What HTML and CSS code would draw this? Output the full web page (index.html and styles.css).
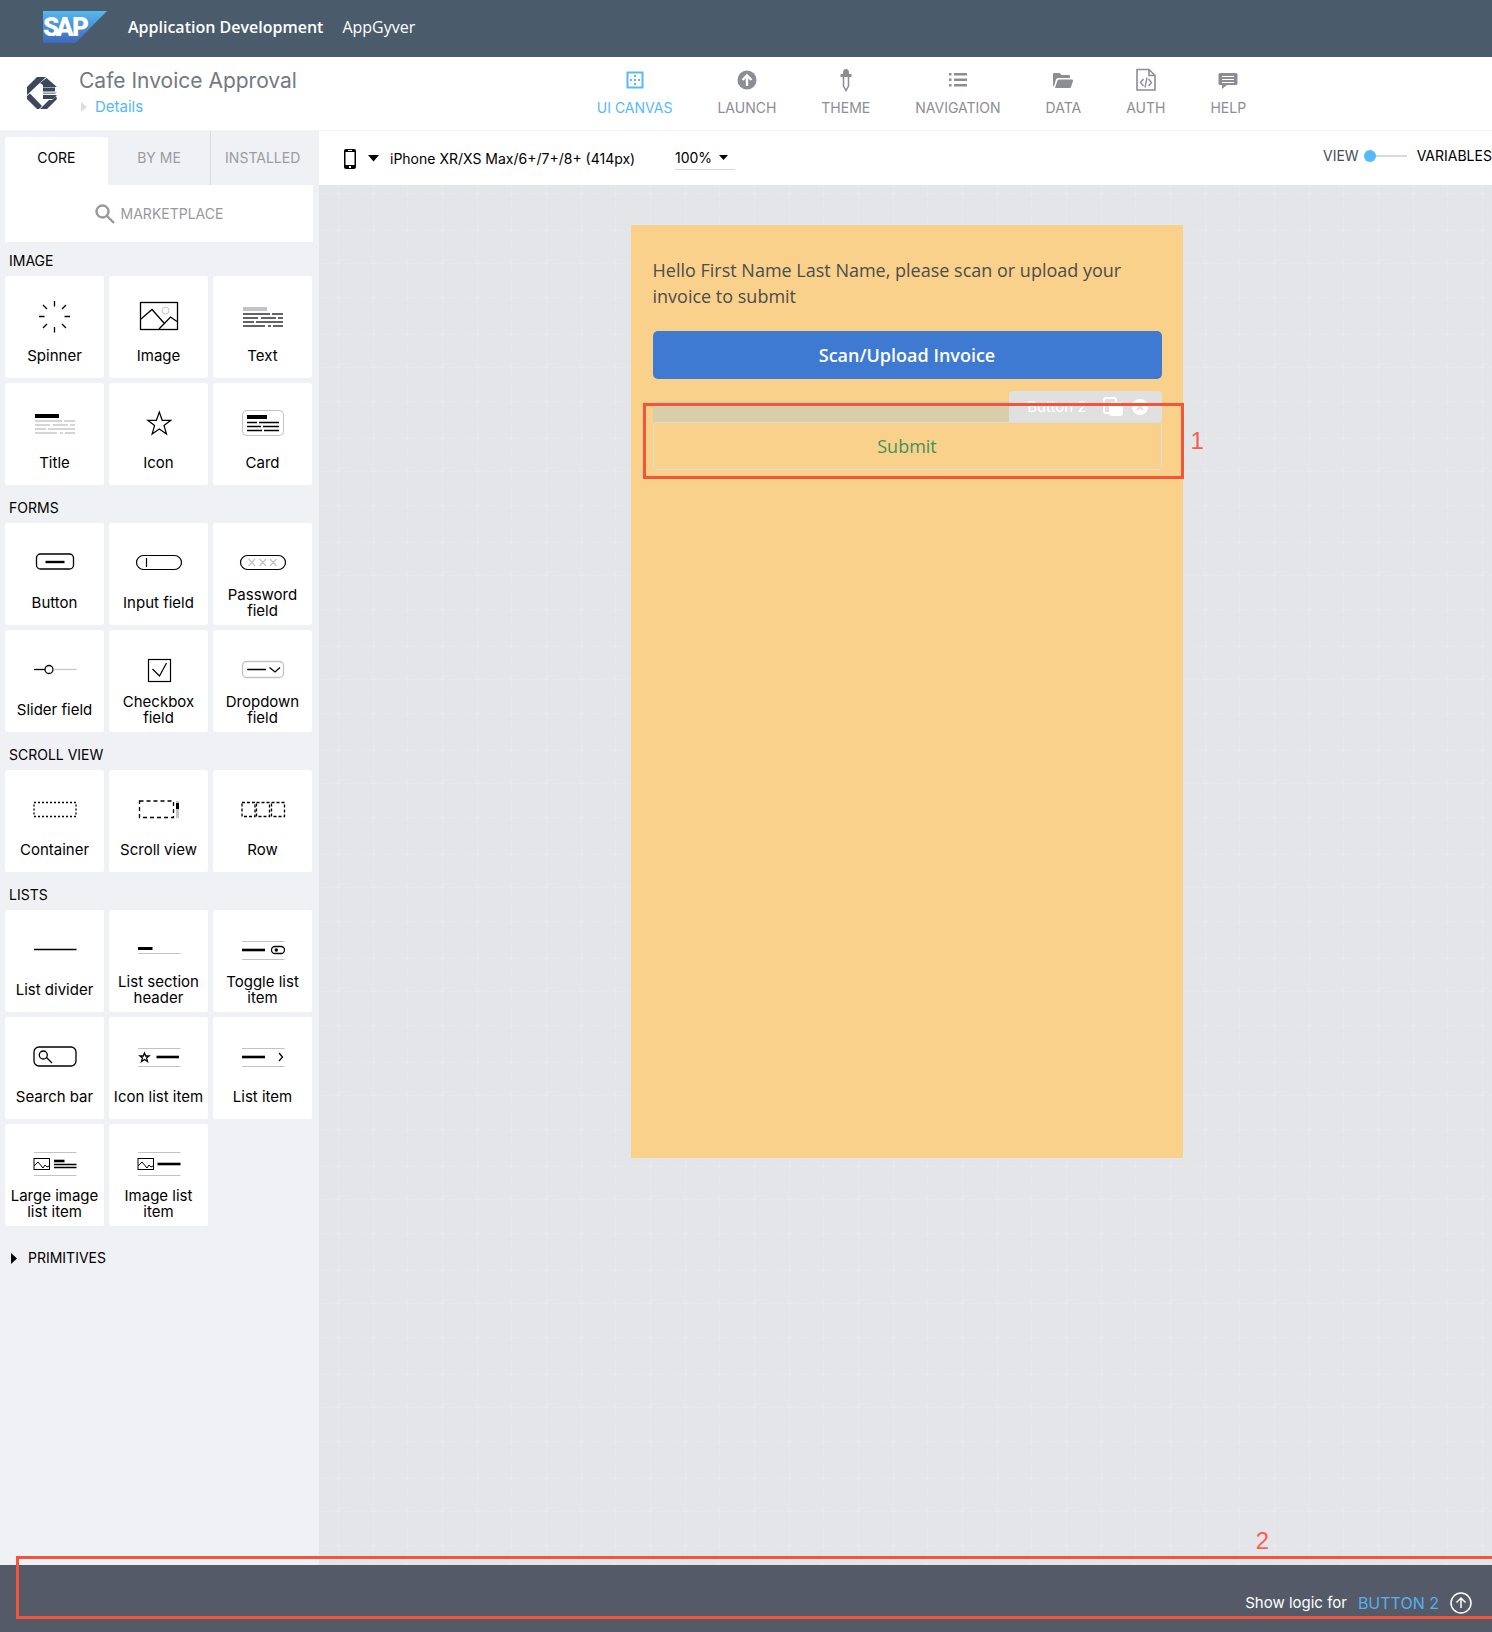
FILE: index.html
```html
<!DOCTYPE html>
<html lang="en">
<head>
<meta charset="utf-8">
<meta name="viewport" content="width=device-width, initial-scale=1">
<title>Cafe Invoice Approval</title>
<link rel="stylesheet" href="styles.css">
</head>
<body>
<svg class="defs" aria-hidden="true">
  <defs>
    <g id="text-lines" fill="none" stroke-width="2">
      <path d="M5 18H32M34 18H45M5 22H20M23 22H38M40 22H45M5 26H16M18 26H45M5 30H27M30 30H33M35 30H45"/>
    </g>
    <g id="thumb" fill="none" stroke="#000">
      <rect x="4" y="14.500" width="15.500" height="11"/>
      <path d="M4 22l4-4 5 6 2-3 2 2 2-1" />
    </g>
  </defs>
</svg>

<header class="topbar">
  <svg class="sap-logo" viewBox="0 0 64 32" width="64" height="32" role="img" aria-label="SAP">
    <defs><linearGradient id="sap" x1="0" y1="0" x2="0" y2="1"><stop offset="0" stop-color="#55b9ec"/><stop offset="1" stop-color="#4067bd"/></linearGradient></defs>
    <path d="M0 0H64L32.500 32H0Z" fill="url(#sap)"/>
    <text class="sap-text" y="25" x="0 13 29">SAP</text>
  </svg>
  <strong class="suite">Application Development</strong>
  <span class="product">AppGyver</span>
</header>

<div class="appbar">
  <div class="project">
    <svg width="30" height="32" viewBox="0 0 30 32" fill="#3a475c" aria-hidden="true">
      <path d="M10 0H19L0 18V10Z"/>
      <path d="M19.500 1L30 10H16V8L13 6Z"/>
      <path d="M16 10.500H28V14.500H16Z"/>
      <path d="M16 15.500H30L28 17H16Z" fill="#8a93a1"/>
      <path d="M16 18H30L26 22H16Z"/>
      <path d="M0 19L3 16.500L15 29L12 32H10L0 22Z"/>
      <path d="M29 19L30 22L20 32H13L18 27L22 23H25Z"/>
    </svg>
    <div class="project-text">
      <h1>Cafe Invoice Approval</h1>
      <a class="details" href="#details"><svg width="6" height="10" viewBox="0 0 6 10" aria-hidden="true"><path d="M0 0L6 5L0 10Z" fill="#dcdde1"/></svg>Details</a>
    </div>
  </div>
  <nav class="mainnav">
    <a class="active" href="#canvas"><svg width="24" height="24" viewBox="0 0 24 24" aria-hidden="true"><rect x="4.500" y="4.500" width="15" height="15" fill="none" stroke="currentColor" stroke-width="2"/><path d="M11 7h2v2h-2zM11 11h2v2h-2zM11 15h2v2h-2zM7 11h2v2H7zM15 11h2v2h-2z" fill="currentColor"/></svg>UI CANVAS</a>
    <a href="#launch"><svg width="24" height="24" viewBox="0 0 24 24" aria-hidden="true"><circle cx="12" cy="12" r="9.500" fill="currentColor"/><path d="M12 18V8M7.500 12L12 7.500L16.500 12" fill="none" stroke="#fff" stroke-width="2.400"/></svg>LAUNCH</a>
    <a href="#theme"><svg width="24" height="24" viewBox="0 0 24 24" aria-hidden="true"><path d="M9 5Q9 1 12 1T15 5V6H17.500V9H6.500V6H9Z" fill="currentColor"/><path d="M9.500 9V18L12 22.500L14.500 18V9" fill="none" stroke="currentColor" stroke-width="1.500"/></svg>THEME</a>
    <a href="#navigation"><svg width="24" height="24" viewBox="0 0 24 24" aria-hidden="true"><path d="M3 5h2.500v2.500H3zM8 5h13v2.500H8zM3 10.500h2.500V13H3zM8 10.500h13V13H8zM3 16h2.500v2.500H3zM8 16h13v2.500H8z" fill="currentColor"/></svg>NAVIGATION</a>
    <a href="#data"><svg width="24" height="24" viewBox="0 0 24 24" aria-hidden="true"><path d="M2 18V6Q2 5 3 5H8.500L10.500 7H18Q19 7 19 8V10H7Q5.500 10 5 11.500L3 18ZM4 20L6.500 12.500Q7 11.500 8 11.500H21Q22.500 11.500 22 13L20 19Q19.700 20 18.500 20Z" fill="currentColor"/></svg>DATA</a>
    <a href="#auth"><svg width="24" height="24" viewBox="0 0 24 24" aria-hidden="true"><path d="M3 1.500H15L21 7.500V22H3ZM15 1.500V7.500H21" fill="none" stroke="currentColor" stroke-width="1.600"/><path d="M9.500 11L6.500 14.500L9.500 18M14.500 11L17.500 14.500L14.500 18M13 9.500L11 19.500" fill="none" stroke="currentColor" stroke-width="1.400"/></svg>AUTH</a>
    <a href="#help"><svg width="24" height="24" viewBox="0 0 24 24" aria-hidden="true"><path d="M4 5H20Q21.500 5 21.500 6.500V15.500Q21.500 17 20 17H11L6 21V17H4Q2.500 17 2.500 15.500V6.500Q2.500 5 4 5Z" fill="currentColor"/><path d="M6 8.500H18M6 11.500H18M6 14.500H18" stroke="#fff" stroke-width="1.200"/></svg>HELP</a>
  </nav>
</div>

<div class="workspace">
  <aside class="sidebar">
    <div class="tabs">
      <button class="tab active">CORE</button>
      <button class="tab">BY ME</button>
      <button class="tab last">INSTALLED</button>
    </div>
    <button class="market"><svg width="20" height="20" viewBox="0 0 20 20" fill="none" stroke="#98999d" stroke-width="2.400" aria-hidden="true"><circle cx="7.500" cy="7.500" r="6"/><path d="M12 12L19 19"/></svg>MARKETPLACE</button>

    <div class="library">
      <section>
        <h2>IMAGE</h2>
        <div class="tiles">
          <button class="tile"><svg width="49" height="40" viewBox="0 0 49 40" fill="none" stroke="#000" aria-hidden="true"><path d="M24.500 5V10.500M24.500 31V36.500M9 20.500H14.500M34.500 20.500H40M13 9L17 13M36 9L32 13M13 32L17 28M36 32L32 28" stroke-width="1.300"/></svg><span>Spinner</span></button>
          <button class="tile"><svg width="49" height="40" viewBox="0 0 49 40" fill="none" stroke="#000" aria-hidden="true"><circle cx="31.500" cy="14.500" r="3.500" stroke="#c4c4c8"/><rect x="6.500" y="6.500" width="37" height="27" stroke-width="1.300"/><path d="M7 23L18 13.500L30 27M25 33L36.500 21L43 25.500" stroke-width="1.300"/></svg><span>Image</span></button>
          <button class="tile"><svg width="49" height="40" viewBox="0 0 49 40" aria-hidden="true"><path d="M5 11H29V15H5Z" fill="#c2c2c8"/><use href="#text-lines" stroke="#646466"/></svg><span>Text</span></button>
          <button class="tile"><svg width="49" height="40" viewBox="0 0 49 40" aria-hidden="true"><path d="M5 11H29V15H5Z"/><use href="#text-lines" stroke="#d4d4d9"/></svg><span>Title</span></button>
          <button class="tile"><svg width="49" height="40" viewBox="0 0 49 40" fill="none" stroke="#000" aria-hidden="true"><path d="M25.300 9L28.200 17.300H36.800L30 22.500L32.500 31L25.300 26L18.100 31L20.600 22.500L13.800 17.300H22.400Z" stroke-width="1.200"/></svg><span>Icon</span></button>
          <button class="tile"><svg width="49" height="40" viewBox="0 0 49 40" fill="none" stroke="#000" aria-hidden="true"><rect x="4.500" y="7.500" width="41" height="25" rx="4" stroke="#c2c2c6"/><path d="M9 14H29" stroke-width="4"/><path d="M9 19.500H19M21 19.500H41M9 23.500H23M25 23.500H41M9 27.500H24M26 27.500H41" stroke-width="1.300"/></svg><span>Card</span></button>
        </div>
      </section>

      <section>
        <h2>FORMS</h2>
        <div class="tiles">
          <button class="tile"><svg width="49" height="40" viewBox="0 0 49 40" fill="none" stroke="#000" aria-hidden="true"><rect x="6.500" y="11" width="37" height="15" rx="4" stroke-width="1.300"/><path d="M15.500 19H34.500" stroke-width="2.400"/></svg><span>Button</span></button>
          <button class="tile"><svg width="49" height="40" viewBox="0 0 49 40" fill="none" stroke="#000" stroke-width="1.200" aria-hidden="true"><rect x="2.500" y="12.500" width="45" height="14" rx="7"/><path d="M12.500 15V24"/></svg><span>Input field</span></button>
          <button class="tile"><svg width="49" height="40" viewBox="0 0 49 40" fill="none" stroke="#000" stroke-width="1.200" aria-hidden="true"><rect x="2.500" y="12.500" width="45" height="14" rx="7"/><path d="M10.500 16L17 23M17 16L10.500 23M21.500 16L28 23M28 16L21.500 23M32 16L38.500 23M38.500 16L32 23" stroke="#c2c2c6"/></svg><span>Password field</span></button>
          <button class="tile"><svg width="49" height="40" viewBox="0 0 49 40" fill="none" stroke="#000" stroke-width="1.300" aria-hidden="true"><path d="M4 19.500H15"/><circle cx="19" cy="19.500" r="4"/><path d="M23.500 19.500H46.500" stroke="#c8c8cb"/></svg><span>Slider field</span></button>
          <button class="tile"><svg width="49" height="40" viewBox="0 0 49 40" fill="none" stroke="#000" stroke-width="1.200" aria-hidden="true"><rect x="14.500" y="9.500" width="22" height="22"/><path d="M18.500 19L25.500 26L32.500 13"/></svg><span>Checkbox field</span></button>
          <button class="tile"><svg width="49" height="40" viewBox="0 0 49 40" fill="none" stroke="#000" stroke-width="1.300" aria-hidden="true"><rect x="4.500" y="11.500" width="41" height="16" rx="4" stroke="#c2c2c6"/><path d="M9 19.500H28M31.500 17.500L37 22L42 17.500"/></svg><span>Dropdown field</span></button>
        </div>
      </section>

      <section>
        <h2>SCROLL VIEW</h2>
        <div class="tiles">
          <button class="tile"><svg width="49" height="40" viewBox="0 0 49 40" fill="none" stroke="#000" stroke-width="1.300" aria-hidden="true"><rect x="4" y="12.500" width="42" height="14" stroke-dasharray="2 2"/></svg><span>Container</span></button>
          <button class="tile"><svg width="49" height="40" viewBox="0 0 49 40" fill="none" stroke="#000" stroke-width="1.300" aria-hidden="true"><rect x="5.500" y="11" width="34" height="16.500" stroke-dasharray="4 3"/><path d="M43.500 11V28" stroke="#c4c4c8" stroke-width="3"/><path d="M43.500 13V19" stroke-width="3"/></svg><span>Scroll view</span></button>
          <button class="tile"><svg width="49" height="40" viewBox="0 0 49 40" fill="none" stroke="#000" stroke-width="1.300" stroke-dasharray="3 2" aria-hidden="true"><rect x="4" y="12.500" width="13" height="14"/><rect x="18.500" y="12.500" width="13" height="14"/><rect x="33.500" y="12.500" width="13" height="14"/></svg><span>Row</span></button>
        </div>
      </section>

      <section>
        <h2>LISTS</h2>
        <div class="tiles">
          <button class="tile"><svg width="49" height="40" viewBox="0 0 49 40" stroke="#000" stroke-width="1.300" aria-hidden="true"><path d="M4 19.500H46.500"/></svg><span>List divider</span></button>
          <button class="tile"><svg width="49" height="40" viewBox="0 0 49 40" stroke="#000" aria-hidden="true"><path d="M4 18.500H18.500" stroke-width="3"/><path d="M4 23.500H46.500" stroke="#c2c2c6"/></svg><span>List section header</span></button>
          <button class="tile"><svg width="49" height="40" viewBox="0 0 49 40" fill="none" stroke="#000" aria-hidden="true"><path d="M4 11.500H46.500M4 29.500H46.500" stroke="#c2c2c6"/><path d="M4 20H27" stroke-width="2.600"/><rect x="33.500" y="16.500" width="13" height="7" rx="3.500" stroke-width="1.300"/><circle cx="38.300" cy="20" r="1.700" fill="#000" stroke="none"/></svg><span>Toggle list item</span></button>
          <button class="tile"><svg width="49" height="40" viewBox="0 0 49 40" fill="none" stroke="#000" stroke-width="1.300" aria-hidden="true"><rect x="4" y="10" width="42" height="19" rx="5"/><circle cx="13.300" cy="18" r="4"/><path d="M16.500 20.500L22 26"/></svg><span>Search bar</span></button>
          <button class="tile"><svg width="49" height="40" viewBox="0 0 49 40" fill="none" stroke="#000" aria-hidden="true"><path d="M4 11.500H46.500M4 29.500H46.500" stroke="#c2c2c6"/><path d="M10.500 16L11.700 19H15L12.500 21L13.500 24.500L10.500 22.500L7.500 24.500L8.500 21L6 19H9.300Z" stroke-width="1.300"/><path d="M22.500 20H45" stroke-width="2.600"/></svg><span>Icon list item</span></button>
          <button class="tile"><svg width="49" height="40" viewBox="0 0 49 40" fill="none" stroke="#000" aria-hidden="true"><path d="M4 11.500H46.500M4 29.500H46.500" stroke="#c2c2c6"/><path d="M4 20H27" stroke-width="2.600"/><path d="M41 16L44.500 20L41 24" stroke-width="1.300"/></svg><span>List item</span></button>
          <button class="tile"><svg width="49" height="40" viewBox="0 0 49 40" fill="none" stroke="#000" aria-hidden="true"><path d="M4 8.500H46.500M4 31.500H46.500" stroke="#c2c2c6"/><use href="#thumb"/><path d="M24 17H34.500" stroke-width="2.600"/><path d="M24 20.500H46.500M24 23.500H46.500" stroke-width="1.300"/></svg><span>Large image list item</span></button>
          <button class="tile"><svg width="49" height="40" viewBox="0 0 49 40" fill="none" stroke="#000" aria-hidden="true"><path d="M4 8.500H46.500M4 31.500H46.500" stroke="#c2c2c6"/><use href="#thumb"/><path d="M23.500 20H46.500" stroke-width="2.600"/></svg><span>Image list item</span></button>
        </div>
      </section>
    </div>

    <button class="primitives"><svg width="6" height="11" viewBox="0 0 6 11" aria-hidden="true"><path d="M0 0L6 5.500L0 11Z"/></svg>PRIMITIVES</button>
  </aside>

  <main class="main">
    <div class="toolbar">
      <label class="device" for="device">
        <svg width="12" height="20" viewBox="0 0 12 20" aria-hidden="true"><rect width="12" height="20" rx="2"/><path d="M1.500 3H10.500V16H1.500Z" fill="#fff"/><path d="M4 1.500H8" stroke="#fff"/><rect x="5" y="17" width="2" height="2" fill="#fff"/></svg>
        <svg width="11" height="7" viewBox="0 0 11 7" aria-hidden="true"><path d="M0 0H11L5.500 6.500Z"/></svg>
      </label>
      <select class="device-select" id="device"><option>iPhone XR/XS Max/6+/7+/8+ (414px)</option></select>
      <div class="zoom">
        <select id="zoom" aria-label="Zoom"><option>100%</option></select>
        <svg width="9" height="5" viewBox="0 0 9 5" aria-hidden="true"><path d="M0 0H9L4.500 5Z"/></svg>
      </div>
      <div class="mode">
        <label class="mode-view" for="mode">VIEW</label>
        <input type="range" id="mode" min="0" max="1" value="0">
        <span>VARIABLES</span>
      </div>
    </div>

    <div class="canvas">
      <div class="phone">
        <p class="greeting">Hello First Name Last Name, please scan or upload your invoice to submit</p>
        <button class="scan">Scan/Upload Invoice</button>
        <div class="selected">
          <div class="spacing"></div>
          <div class="tag">
            <span>Button 2</span>
            <svg width="20" height="20" viewBox="0 0 20 20" aria-hidden="true"><path d="M13 5V3Q13 1 11 1H3Q1 1 1 3V14Q1 16 3 16H7" fill="none" stroke="#fff" stroke-width="2"/><rect x="6" y="5" width="14" height="14" rx="3" fill="#fff"/></svg>
            <svg width="16" height="16" viewBox="0 0 16 16" aria-hidden="true"><circle cx="8" cy="8" r="8" fill="#fff"/><path d="M5 5L11 11M11 5L5 11" stroke="#e0e0e0" stroke-width="2"/></svg>
          </div>
          <button class="submit">Submit</button>
          <div class="mark mark-one"></div>
          <span class="mark-label label-one">1</span>
        </div>
      </div>
    </div>
  </main>
</div>

<footer class="logicbar">
  <span>Show logic for</span>
  <a href="#logic">BUTTON 2</a>
  <svg width="22" height="22" viewBox="0 0 22 22" fill="none" stroke="#fff" stroke-width="1.500" aria-hidden="true"><circle cx="11" cy="11" r="10"/><path d="M11 16V6.500M6.500 10.500L11 6L15.500 10.500"/></svg>
  <div class="mark mark-two"></div>
  <span class="mark-label label-two">2</span>
</footer>
</body>
</html>
```

FILE: styles.css
```css
* { box-sizing: border-box; }

body {
  margin: 0;
  min-height: 100vh;
  display: flex;
  flex-direction: column;
  overflow-x: hidden;
  background: #fff;
  color: #000;
  font: 14px/20px Inter, "Open Sans", sans-serif;
}

button, select, input { font: inherit; color: inherit; }
button { border: 0; padding: 0; cursor: pointer; }
a { text-decoration: none; }
svg { display: block; flex: none; }
.defs { position: absolute; width: 0; height: 0; }

/* Top bars */
.topbar {
  display: flex;
  align-items: center;
  height: 57px;
  padding: 0 43px 4px;
  background: #4a5b6c;
  color: #fff;
  font: 16px/20px "Open Sans", sans-serif;
}
.sap-text { font: 900 26px Roboto, sans-serif; fill: #fff; }
.suite { margin-left: 21px; font-weight: 600; }
.product { margin-left: 19px; }

.appbar {
  display: grid;
  grid-template-columns: 40% 1fr;
  height: 74px;
  border-bottom: 1px solid #f3f4f6;
}
.project { display: flex; align-items: center; gap: 22px; padding: 0 27px 2px; }
.project-text { display: flex; flex-direction: column; gap: 4px; }
h1 { margin: 0; font-size: 21px; line-height: 24px; font-weight: 400; color: #737983; }
.details { display: flex; align-items: center; gap: 8px; padding-left: 2px; color: #55b7f5; font-size: 15px; }

.mainnav { display: flex; gap: 45px; padding-top: 11px; }
.mainnav a { display: flex; flex-direction: column; align-items: center; gap: 6px; color: #8c8d95; }
.mainnav .active { color: #57b9f8; }

/* Component library */
.workspace { flex: 1; display: flex; }
.sidebar { flex: none; width: 319px; padding: 0 5px; background: #f0f1f4; }
.tabs { display: flex; height: 54px; }
.tab { flex: 1; background: none; color: #9b9ca1; border-right: 1px solid #d9dade; }
.tab.active { margin-top: 6px; padding-bottom: 6px; border: 0; border-radius: 3px 3px 0 0; background: #fff; color: #000; }
.tab.last { border: 0; }
.market {
  display: flex;
  align-items: center;
  justify-content: center;
  gap: 6px;
  width: 308px;
  height: 57px;
  background: #fff;
  color: #98999d;
}
.library { display: flex; flex-direction: column; gap: 14px; padding-top: 10px; }
h2 { margin: 0 4px 6px; font-size: 14px; line-height: 18px; font-weight: 400; }
.tiles { display: grid; grid-template-columns: repeat(3, 99px); gap: 5px; }
.tile {
  display: flex;
  flex-direction: column;
  align-items: center;
  gap: 4px;
  height: 102px;
  padding: 20px 2px 0;
  border-radius: 3px;
  background: #fff;
  font-size: 15px;
  line-height: 16px;
}
.tile span { display: flex; align-items: center; height: 32px; }
.primitives { display: flex; align-items: center; gap: 11px; margin: 22px 6px; background: none; }

/* Toolbar */
.main { flex: 1; min-width: 0; display: flex; flex-direction: column; }
.toolbar { display: flex; align-items: center; height: 54px; padding: 1px 0 0 25px; }
.toolbar select { appearance: none; padding: 0; border: 0; background: none; }
.device { display: flex; align-items: center; gap: 12px; }
.device-select { margin-left: 11px; }
.zoom { display: flex; align-items: center; gap: 6px; margin-left: 39px; padding: 0 7px 1px 0; border-bottom: 1px solid #d6d7da; }
.mode { display: flex; align-items: center; flex: none; width: 169px; margin-left: auto; overflow: hidden; padding-bottom: 5px; }
.mode-view { color: #454c5c; }
.mode input { appearance: none; flex: none; width: 43px; height: 12px; margin: 0 10px 0 5px; background: linear-gradient(#d9dae0, #d9dae0) center / 100% 2px no-repeat; }
.mode input::-webkit-slider-thumb { appearance: none; width: 12px; height: 12px; border-radius: 50%; background: #57b9f8; }

/* Canvas */
.canvas {
  flex: 1;
  display: flex;
  justify-content: center;
  align-items: flex-start;
  padding: 40px 24px 40px 26px;
  background: #e4e5e9 url("data:image/svg+xml,%3Csvg xmlns='http://www.w3.org/2000/svg' width='104' height='104'%3E%3Cpath d='M0 4.500H104M0 39.500H104M0 73.500H104M4.500 0V104M39.500 0V104M73.500 0V104' stroke='%23e8e9ec' stroke-dasharray='3 2'/%3E%3Cpath d='M2 4.500h5M37 4.500h5M71 4.500h5M2 39.500h5M37 39.500h5M71 39.500h5M2 73.500h5M37 73.500h5M71 73.500h5M4.500 2v5M39.500 2v5M73.500 2v5M4.500 37v5M39.500 37v5M73.500 37v5M4.500 71v5M39.500 71v5M73.500 71v5' stroke='%23eaebee'/%3E%3C/svg%3E") 15px 5px;
}
.phone {
  width: 552px;
  min-height: 933px;
  padding: 32px 21px 32px 22px;
  background: #f9d18b;
  font: 18px/26px "Open Sans", sans-serif;
}
.greeting { margin: 0 0 22px; color: #4b4d4e; }
.scan { display: block; width: 100%; height: 48px; border-radius: 5px; background: #3e7ad1; color: #fff; font-weight: 600; }
.selected { position: relative; margin-top: 43px; }
.submit { display: block; width: 100%; height: 48px; border: 1px solid #dcdfd9; border-radius: 4px; background: none; color: #43915b; }
.spacing { position: absolute; left: 0; right: 0; bottom: 100%; height: 21px; background: #d8cfaa; }
.tag {
  position: absolute;
  right: 0;
  bottom: 100%;
  display: flex;
  align-items: center;
  height: 31px;
  padding: 0 14px 0 18px;
  border-radius: 4px 4px 0 0;
  background: #e0e0e0;
  color: #fff;
  font: 15px/20px Inter, sans-serif;
}
.tag span { margin-right: 16px; }
.tag svg + svg { margin-left: 9px; }

/* Step markers */
.mark { position: absolute; border: 3px solid #f45439; pointer-events: none; }
.mark-one { top: -19px; right: -22px; bottom: -9px; left: -10px; }
.mark-two { top: -9px; right: -4px; bottom: 13px; left: 16px; }
.mark-label { position: absolute; color: #f95f4e; font: 24px/28px "Liberation Sans", sans-serif; }
.label-one { top: 5px; left: 100%; padding-left: 29px; }
.label-two { top: -38px; right: 223px; }

/* Logic bar */
.logicbar {
  position: relative;
  display: flex;
  align-items: center;
  justify-content: flex-end;
  height: 67px;
  padding: 8px 20px 0;
  background: #545a68;
  color: #fff;
  font-size: 15px;
}
.logicbar a { margin: 0 11px; color: #55b0f0; font-size: 16px; }
```
